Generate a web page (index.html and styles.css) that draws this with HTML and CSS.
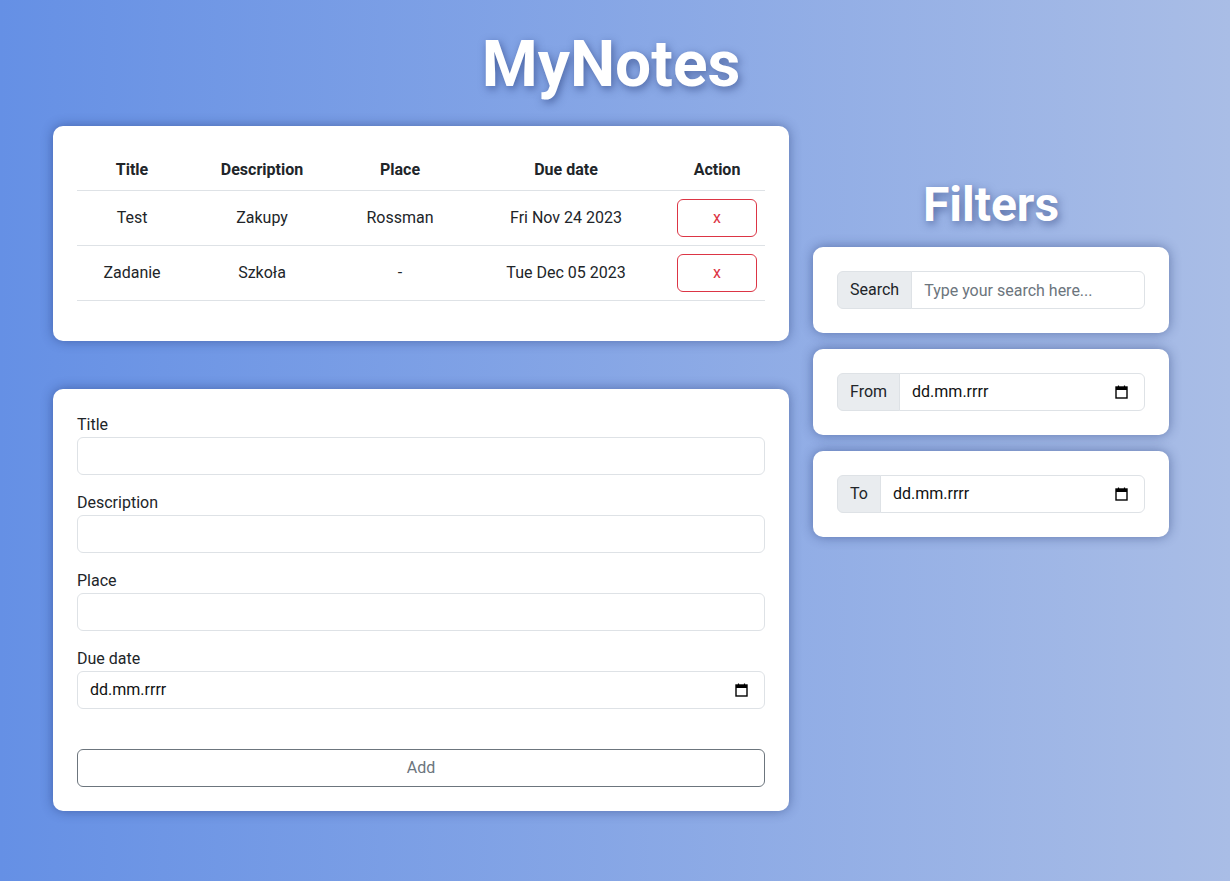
FILE: index.html
```html
<!DOCTYPE html>
<html lang="pl">
<head>
<meta charset="utf-8">
<title>MyNotes</title>
<link rel="stylesheet" href="styles.css">
</head>
<body>
<h1 class="app-title">MyNotes</h1>
<div class="layout">
  <div class="main-col">
    <section class="card">
      <table class="notes">
        <colgroup>
          <col class="c-title"><col class="c-desc"><col class="c-place"><col class="c-date"><col class="c-action">
        </colgroup>
        <thead>
          <tr><th>Title</th><th>Description</th><th>Place</th><th>Due date</th><th>Action</th></tr>
        </thead>
        <tbody>
          <tr><td>Test</td><td>Zakupy</td><td>Rossman</td><td>Fri Nov 24 2023</td><td><button class="btn btn-danger">x</button></td></tr>
          <tr><td>Zadanie</td><td>Szkoła</td><td>-</td><td>Tue Dec 05 2023</td><td><button class="btn btn-danger">x</button></td></tr>
        </tbody>
      </table>
    </section>

    <section class="card form-card">
      <div class="field">
        <label class="label">Title</label>
        <input class="control" type="text">
      </div>
      <div class="field">
        <label class="label">Description</label>
        <input class="control" type="text">
      </div>
      <div class="field">
        <label class="label">Place</label>
        <input class="control" type="text">
      </div>
      <div class="field">
        <label class="label">Due date</label>
        <div class="control date-control">
          <span class="date-text">dd.mm.rrrr</span>
          <svg class="cal-icon" width="13" height="14" viewBox="0 0 13 14"><path d="M3.5 0.5v2M9.5 0.5v2" stroke="#000" stroke-width="1.2"/><rect x="1" y="2" width="11" height="11" fill="none" stroke="#000" stroke-width="1.4"/><rect x="1" y="2" width="11" height="3" fill="#000"/></svg>
        </div>
      </div>
      <button class="btn btn-secondary btn-block">Add</button>
    </section>
  </div>

  <aside class="side-col">
    <h2 class="filters-title">Filters</h2>
    <section class="card filter-card">
      <div class="input-group">
        <span class="addon">Search</span>
        <input class="control group-control" type="text" placeholder="Type your search here...">
      </div>
    </section>
    <section class="card filter-card">
      <div class="input-group">
        <span class="addon">From</span>
        <div class="control group-control date-control">
          <span class="date-text">dd.mm.rrrr</span>
          <svg class="cal-icon" width="13" height="14" viewBox="0 0 13 14"><path d="M3.5 0.5v2M9.5 0.5v2" stroke="#000" stroke-width="1.2"/><rect x="1" y="2" width="11" height="11" fill="none" stroke="#000" stroke-width="1.4"/><rect x="1" y="2" width="11" height="3" fill="#000"/></svg>
        </div>
      </div>
    </section>
    <section class="card filter-card">
      <div class="input-group">
        <span class="addon">To</span>
        <div class="control group-control date-control">
          <span class="date-text">dd.mm.rrrr</span>
          <svg class="cal-icon" width="13" height="14" viewBox="0 0 13 14"><path d="M3.5 0.5v2M9.5 0.5v2" stroke="#000" stroke-width="1.2"/><rect x="1" y="2" width="11" height="11" fill="none" stroke="#000" stroke-width="1.4"/><rect x="1" y="2" width="11" height="3" fill="#000"/></svg>
        </div>
      </div>
    </section>
  </aside>
</div>
</body>
</html>
```

FILE: styles.css
```css
* { box-sizing: border-box; }

html, body { height: 100%; }

body {
  margin: 0;
  min-height: 881px;
  font-family: Roboto, "Liberation Sans", sans-serif;
  font-size: 16px;
  line-height: 1.5;
  color: #212529;
  background: linear-gradient(to right, #6590e5 0%, #a9bde6 100%);
}

.app-title {
  margin: 27px 0 22px -8px;
  text-align: center;
  font-size: 64px;
  line-height: 1.2;
  font-weight: 700;
  color: #fff;
  text-shadow: 2px 3px 8px rgba(30, 50, 110, 0.55);
}

.layout {
  display: flex;
  gap: 24px;
  padding-left: 53px;
}

.main-col {
  width: 736px;
  display: flex;
  flex-direction: column;
  gap: 48px;
}

.side-col {
  width: 356px;
  padding-top: 50px;
  display: flex;
  flex-direction: column;
  gap: 16px;
}

.card {
  background: #fff;
  border-radius: 10px;
  padding: 24px;
  box-shadow: 0 0 12px rgba(20, 40, 100, 0.45);
}

.notes {
  width: 100%;
  border-collapse: collapse;
  margin-bottom: 16px;
  table-layout: fixed;
}

.c-title { width: 110px; }
.c-desc { width: 150px; }
.c-place { width: 126px; }
.c-date { width: 206px; }
.c-action { width: 96px; }

.notes th, .notes td {
  padding: 8px;
  text-align: center;
  vertical-align: middle;
  border-bottom: 1px solid #dee2e6;
  font-weight: 400;
}

.notes th { font-weight: 700; }

.btn {
  display: inline-block;
  font-family: inherit;
  font-size: 16px;
  line-height: 24px;
  padding: 6px 12px;
  border-radius: 6px;
  background: transparent;
  cursor: pointer;
}

.btn-danger {
  width: 100%;
  border: 1px solid #dc3545;
  color: #dc3545;
}

.btn-secondary {
  border: 1px solid #6c757d;
  color: #6c757d;
}

.btn-block {
  width: 100%;
  margin-top: 24px;
}

.field {
  margin-bottom: 16px;
}

.label {
  display: block;
  margin-bottom: 0;
  line-height: 24px;
}

.control {
  display: block;
  width: 100%;
  height: 38px;
  padding: 6px 12px;
  font-family: inherit;
  font-size: 16px;
  line-height: 24px;
  color: #212529;
  background: #fff;
  border: 1px solid #dee2e6;
  border-radius: 6px;
  outline: none;
}

.control::placeholder { color: #6c757d; }

.date-control {
  display: flex;
  align-items: center;
  justify-content: space-between;
  padding-left: 12px;
  padding-right: 16px;
}

.date-text {
  color: #111;
  font-size: 16px;
}

.cal-icon { display: block; flex: none; }

.filters-title {
  margin: 0 0 -2px;
  text-align: center;
  font-size: 48px;
  line-height: 1.2;
  font-weight: 700;
  color: #fff;
  text-shadow: 2px 3px 8px rgba(30, 50, 110, 0.55);
}

.input-group {
  display: flex;
  height: 38px;
}

.addon {
  display: flex;
  align-items: center;
  padding: 6px 12px;
  background: #e9ecef;
  border: 1px solid #dee2e6;
  border-radius: 6px 0 0 6px;
  line-height: 24px;
  color: #212529;
  white-space: nowrap;
}

.group-control {
  flex: 1;
  width: auto;
  min-width: 0;
  margin-left: -1px;
  border-radius: 0 6px 6px 0;
}
```
